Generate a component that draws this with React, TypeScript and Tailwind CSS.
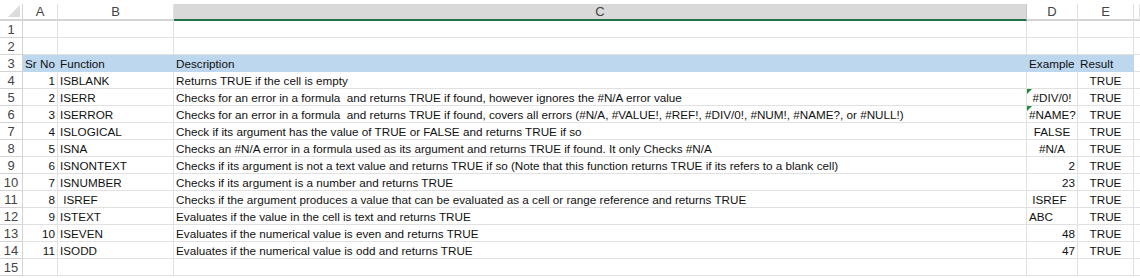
import React from "react";

type Row = {
  no?: string;
  fn?: string;
  desc?: string;
  ex?: string;
  exAlign?: "left" | "center" | "right";
  flag?: boolean;
  res?: string;
};

const rows: Row[] = [
  {},
  {},
  { no: "Sr No", fn: "Function", desc: "Description", ex: "Example", res: "Result" },
  { no: "1", fn: "ISBLANK", desc: "Returns TRUE if the cell is empty", res: "TRUE" },
  { no: "2", fn: "ISERR", desc: "Checks for an error in a formula  and returns TRUE if found, however ignores the #N/A error value", ex: "#DIV/0!", exAlign: "center", flag: true, res: "TRUE" },
  { no: "3", fn: "ISERROR", desc: "Checks for an error in a formula  and returns TRUE if found, covers all errors (#N/A, #VALUE!, #REF!, #DIV/0!, #NUM!, #NAME?, or #NULL!)", ex: "#NAME?", exAlign: "center", flag: true, res: "TRUE" },
  { no: "4", fn: "ISLOGICAL", desc: "Check if its argument has the value of TRUE or FALSE and returns TRUE if so", ex: "FALSE", exAlign: "center", res: "TRUE" },
  { no: "5", fn: "ISNA", desc: "Checks an #N/A error in a formula used as its argument and returns TRUE if found. It only Checks #N/A", ex: "#N/A", exAlign: "center", res: "TRUE" },
  { no: "6", fn: "ISNONTEXT", desc: "Checks if its argument is not a text value and returns TRUE if so (Note that this function returns TRUE if its refers to a blank cell)", ex: "2", exAlign: "right", res: "TRUE" },
  { no: "7", fn: "ISNUMBER", desc: "Checks if its argument is a number and returns TRUE", ex: "23", exAlign: "right", res: "TRUE" },
  { no: "8", fn: " ISREF", desc: "Checks if the argument produces a value that can be evaluated as a cell or range reference and returns TRUE", ex: " ISREF", exAlign: "left", res: "TRUE" },
  { no: "9", fn: "ISTEXT", desc: "Evaluates if the value in the cell is text and returns TRUE", ex: "ABC", exAlign: "left", res: "TRUE" },
  { no: "10", fn: "ISEVEN", desc: "Evaluates if the numerical value is even and returns TRUE", ex: "48", exAlign: "right", res: "TRUE" },
  { no: "11", fn: "ISODD", desc: "Evaluates if the numerical value is odd and returns TRUE", ex: "47", exAlign: "right", res: "TRUE" },
  {},
];

const cell = "h-[17px] border-r border-b border-[#e1e1e1] leading-[17px] whitespace-pre overflow-hidden px-[2px]";
const headCell = "h-[17px] border-r border-b border-[#bdd7ee] bg-[#bdd7ee] leading-[17px] whitespace-pre overflow-hidden px-[2px]";

const alignClass = (a?: string) =>
  a === "center" ? "text-center" : a === "right" ? "text-right" : "text-left";

export default function App() {
  return (
    <div
      className="w-[1140px] h-[278px] bg-white overflow-hidden text-[11.7px] text-[#111]"
      style={{ fontFamily: '"Liberation Sans", Arial, sans-serif' }}
    >
      <div className="grid grid-cols-[23px_35px_116px_853px_51px_56px_1fr] pt-[4px]">
        {/* column letters */}
        <div className="relative h-[17px] border-r border-b-2 border-[#d4d4d4] border-b-[#d4d4d4]">
          <svg className="absolute right-[2px] bottom-[2px]" width="12" height="12" viewBox="0 0 12 12">
            <polygon points="12,0 12,12 0,12" fill="#dcdcdc" />
          </svg>
        </div>
        {["A", "B", "C", "D", "E", ""].map((l) => (
          <div
            key={l || "x"}
            className={
              l === "C"
                ? "h-[17px] border-r border-[#c6c6c6] border-b-2 border-b-[#217346] bg-[#d9d9d9] text-center text-[13px] leading-[15px] text-[#444]"
                : "h-[17px] border-r border-[#e1e1e1] border-b-2 border-b-[#d4d4d4] text-center text-[13px] leading-[15px] text-[#444]"
            }
          >
            {l}
          </div>
        ))}

        {rows.map((r, i) => {
          const hd = i === 2;
          const c = hd ? headCell : cell;
          return (
            <React.Fragment key={i}>
              <div className="h-[17px] border-r border-b border-[#d4d4d4] text-center text-[13px] leading-[17px] text-[#444]">
                {i + 1}
              </div>
              <div className={`${c} ${hd ? "text-left" : "text-right"}`}>{r.no}</div>
              <div className={c}>{r.fn}</div>
              <div className={c}>{r.desc}</div>
              <div className={`${c} relative ${hd ? "text-left" : alignClass(r.exAlign)}`}>
                {r.flag && (
                  <svg className="absolute left-0 top-0" width="5" height="5" viewBox="0 0 5 5">
                    <polygon points="0,0 5,0 0,5" fill="#1e8a3a" />
                  </svg>
                )}
                {r.ex}
              </div>
              <div className={`${c} ${hd ? "text-left" : "text-center"}`}>{r.res}</div>
              <div className="h-[17px] border-b border-[#e1e1e1]" />
            </React.Fragment>
          );
        })}
      </div>
    </div>
  );
}
